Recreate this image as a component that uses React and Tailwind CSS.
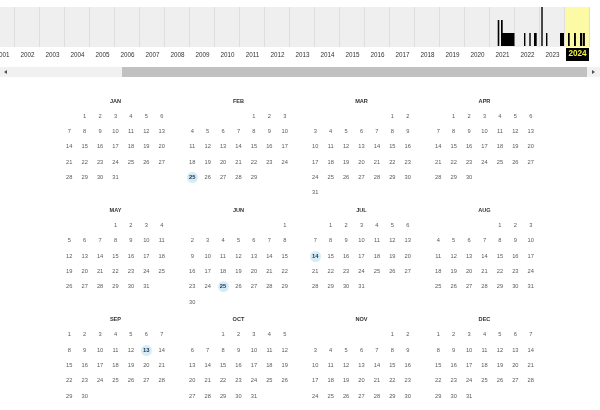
const years = Array.from({ length: 24 }, (_, i) => 2001 + i);

// capture bars per year column: [x, top, width] in a 25x40 box
const bars = {
  2021: [[7.7, 13, 1.6], [11, 13, 1.7], [11, 26, 13.5]],
  2022: [[9, 26, 1.4], [14.3, 26, 1.4], [19, 26, 2.7]],
  2023: [[1.3, 0, 1.4], [6, 26, 1.4], [20, 26, 4]],
  2024: [[3, 26, 1.7], [9, 26, 1.9], [15, 26, 2], [17.7, 26, 2.2]],
};

const months = ["JAN", "FEB", "MAR", "APR", "MAY", "JUN", "JUL", "AUG", "SEP", "OCT", "NOV", "DEC"];
const marked = { 1: [25], 5: [25], 6: [14], 8: [13] };

function monthCells(m) {
  const first = new Date(2024, m, 1).getDay();
  const count = new Date(2024, m + 1, 0).getDate();
  const cells = [];
  for (let i = 0; i < first; i++) cells.push(null);
  for (let d = 1; d <= count; d++) cells.push(d);
  while (cells.length < 42) cells.push(null);
  return cells;
}

function YearColumn({ year }) {
  const active = year === 2024;
  return (
    <div
      className={`relative w-[25px] h-full shrink-0 border-r border-[#dedede] ${
        active ? "bg-[#fdfaa6]" : "bg-[#efefef]"
      }`}
    >
      {bars[year] && (
        <svg width="25" height="40" className="absolute left-0 top-0">
          {bars[year].map(([x, top, w], i) => (
            <rect key={i} x={x} y={top} width={w} height={39 - top} fill="#000" />
          ))}
        </svg>
      )}
    </div>
  );
}

function Month({ index }) {
  const cells = monthCells(index);
  const hits = marked[index] || [];
  return (
    <div className="w-[108px]">
      <div className="h-[15px] flex items-center justify-center text-[5.6px] font-bold text-[#333]">
        {months[index]}
      </div>
      <div className="grid grid-cols-7">
        {cells.map((d, i) => (
          <div key={i} className="h-[15.3px] flex items-center justify-center">
            {d &&
              (hits.includes(d) ? (
                <span className="w-[11px] h-[11px] rounded-full bg-[#d6ecf6] flex items-center justify-center text-[5.8px] font-bold text-[#17324f]">
                  {d}
                </span>
              ) : (
                <span className="text-[5.7px] text-[#5a5a5a]">{d}</span>
              ))}
          </div>
        ))}
      </div>
    </div>
  );
}

export default function App() {
  return (
    <div
      className="w-[600px] h-[410px] overflow-hidden bg-white antialiased [will-change:transform]"
      style={{ fontFamily: '"Liberation Sans", Arial, sans-serif' }}
    >
      <div className="pt-[7px]">
        {/* sparkline */}
        <div className="w-[600px] overflow-hidden">
          <div className="flex h-[40px] ml-[-10px]">
            {years.map((y) => (
              <YearColumn key={y} year={y} />
            ))}
          </div>
          <div className="flex h-[15px] ml-[-10px]">
            {years.map((y) => (
              <div key={y} className="w-[25px] shrink-0 flex items-center justify-center">
                {y === 2024 ? (
                  <span className="w-[23px] h-[13px] bg-black text-[#f5ee3a] font-bold text-[8.2px] flex items-center justify-center">
                    {y}
                  </span>
                ) : (
                  <span className="text-[6.3px] text-[#333]">{y}</span>
                )}
              </div>
            ))}
          </div>
        </div>

        {/* horizontal scrollbar */}
        <div className="mt-[5px] h-[10px] flex bg-[#f1f1f1]">
          <div className="w-[10px] flex items-center justify-center">
            <span className="border-y-[2.5px] border-y-transparent border-r-[3px] border-r-[#505050]" />
          </div>
          <div className="w-[112px]" />
          <div className="w-[465px] bg-[#c1c1c1]" />
          <div className="flex-1 flex items-center justify-center">
            <span className="border-y-[2.5px] border-y-transparent border-l-[3px] border-l-[#505050]" />
          </div>
        </div>

        {/* calendar */}
        <div className="mt-[16.5px] w-[477px] mx-auto grid grid-cols-4 gap-x-[15px] gap-y-[2.5px]">
          {months.map((_, i) => (
            <Month key={i} index={i} />
          ))}
        </div>
      </div>
    </div>
  );
}
